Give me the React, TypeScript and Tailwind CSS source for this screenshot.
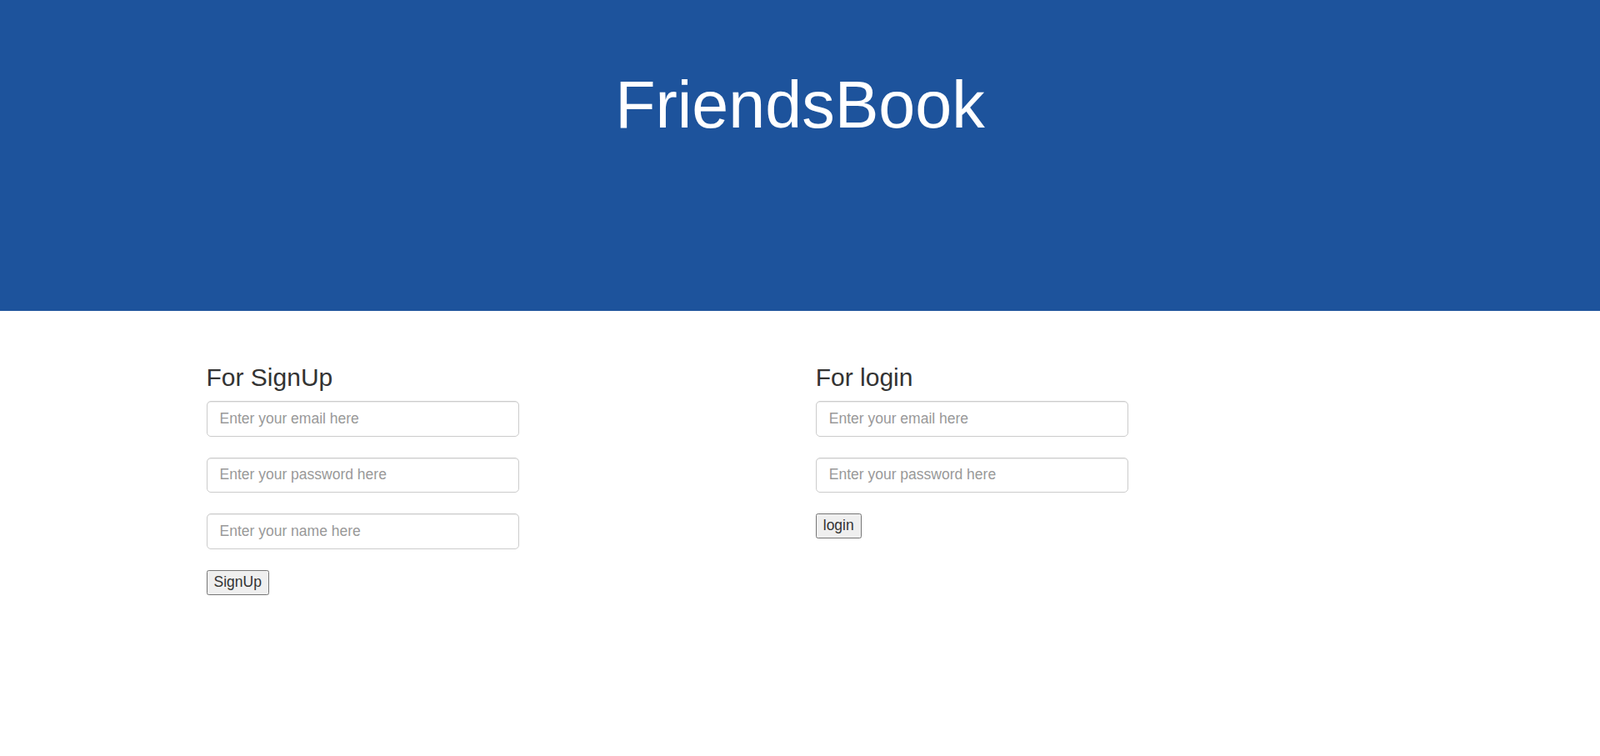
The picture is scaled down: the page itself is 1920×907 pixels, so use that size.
import React from "react";

const font = { fontFamily: '"Liberation Sans", Arial, sans-serif' };

const Field = ({ type, placeholder }: { type: string; placeholder: string }) => (
  <input
    type={type}
    placeholder={placeholder}
    className="block w-[375px] h-[42.5px] mb-[25px] px-[15px] py-[7.5px] text-[17.5px] text-[#555] bg-white border border-[#ccc] rounded-[5px] shadow-[inset_0_1px_1px_rgba(0,0,0,0.075)] placeholder:text-[#999] outline-none"
  />
);

const Submit = ({ label }: { label: string }) => (
  <button className="block h-[30px] px-[8px] text-[17.5px] leading-none text-[#333] bg-[#efefef] border border-[#767676] rounded-[2.5px]">
    {label}
  </button>
);

export default function App() {
  return (
    <div className="min-h-screen bg-white" style={font}>
      <div className="h-[373px] bg-[#1d539c] pt-[82px] mb-[37.5px]">
        <h1 className="text-center text-white text-[79px] leading-[87px] font-normal">FriendsBook</h1>
      </div>

      <div className="mx-auto w-[1462.5px] grid grid-cols-2">
        <div className="px-[18.75px]">
          <h3 className="mt-[25px] text-[30px] leading-[33px] text-[#333] mb-[12.5px]">For SignUp</h3>
          <Field type="email" placeholder="Enter your email here" />
          <Field type="password" placeholder="Enter your password here" />
          <Field type="text" placeholder="Enter your name here" />
          <Submit label="SignUp" />
        </div>
        <div className="px-[18.75px]">
          <h3 className="mt-[25px] text-[30px] leading-[33px] text-[#333] mb-[12.5px]">For login</h3>
          <Field type="email" placeholder="Enter your email here" />
          <Field type="password" placeholder="Enter your password here" />
          <Submit label="login" />
        </div>
      </div>
    </div>
  );
}
